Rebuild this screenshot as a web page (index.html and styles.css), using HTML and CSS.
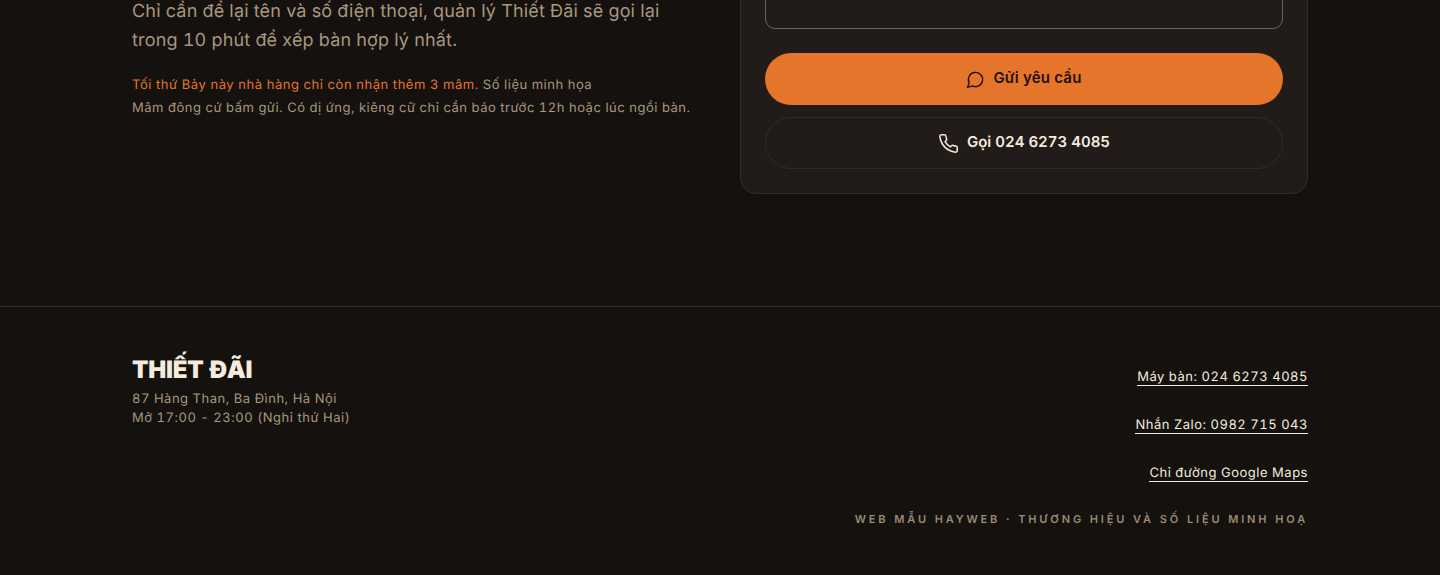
FILE: index.html
```html
<!DOCTYPE html>
<html lang="vi">
<head>
    <meta charset="UTF-8">
    <title>Thiết Đãi</title>
    <link rel="stylesheet" href="styles.css">
</head>
<body>
    <section class="booking">
        <div class="booking-copy">
            <p class="lead">Chỉ cần để lại tên và số điện thoại, quản lý Thiết Đãi sẽ gọi lại trong 10 phút để xếp bàn hợp lý nhất.</p>
            <p class="note"><span class="note-hot">Tối thứ Bảy này nhà hàng chỉ còn nhận thêm 3 mâm.</span> Số liệu minh họa<br>Mâm đông cứ bấm gửi. Có dị ứng, kiêng cữ chỉ cần báo trước 12h hoặc lúc ngồi bàn.</p>
        </div>
        <form class="card">
            <textarea class="field" aria-label="Ghi chú"></textarea>
            <button type="button" class="btn btn-primary">
                <svg class="icon icon-chat" viewBox="0 0 24 24"><path d="M7.9 20A9 9 0 1 0 4 16.1L2 22Z"/></svg>
                <span class="btn-label">Gửi yêu cầu</span>
            </button>
            <a class="btn btn-ghost" href="#">
                <svg class="icon icon-phone" viewBox="0 0 24 24"><path d="M22 16.92v3a2 2 0 0 1-2.18 2 19.79 19.79 0 0 1-8.63-3.07 19.5 19.5 0 0 1-6-6 19.79 19.79 0 0 1-3.07-8.67A2 2 0 0 1 4.11 2h3a2 2 0 0 1 2 1.72 12.84 12.84 0 0 0 .7 2.81 2 2 0 0 1-.45 2.11L8.09 9.91a16 16 0 0 0 6 6l1.27-1.27a2 2 0 0 1 2.11-.45 12.84 12.84 0 0 0 2.81.7A2 2 0 0 1 22 16.92z"/></svg>
                <span class="btn-label">Gọi 024 6273 4085</span>
            </a>
        </form>
    </section>

    <footer class="footer">
        <div class="footer-inner">
            <div class="brand">
                <div class="brand-name">THIẾT ĐÃI</div>
                <p class="brand-info">87 Hàng Than, Ba Đình, Hà Nội<br>Mở 17:00 - 23:00 (Nghỉ thứ Hai)</p>
            </div>
            <div class="footer-links">
                <a href="#">Máy bàn: 024 6273 4085</a>
                <a href="#">Nhắn Zalo: 0982 715 043</a>
                <a href="#">Chỉ đường Google Maps</a>
                <p class="credit">Web mẫu HayWeb · Thương hiệu và số liệu minh hoạ</p>
            </div>
        </div>
    </footer>
</body>
</html>
```

FILE: styles.css
```css
* {
    box-sizing: border-box;
}
html, body {
    height: 575px;
    overflow: hidden;
}
body {
    margin: 0;
    background: #14110e;
    color: #f5ecdf;
    font-family: Inter, "Noto Sans", sans-serif;
    font-variant-numeric: tabular-nums;
    text-rendering: geometricPrecision;
}
.booking {
    display: grid;
    grid-template-columns: 1fr 1fr;
    gap: 40px;
    width: 1176px;
    margin: -100px auto 0;
    padding-bottom: 112px;
}
.booking-copy {
    padding-top: 98px;
}
.lead {
    margin: 0;
    font-size: 18px;
    line-height: 28.8px;
    letter-spacing: 0.01em;
    color: #a8977f;
}
.note {
    margin: 18px 0 0;
    font-size: 13px;
    line-height: 23px;
    letter-spacing: 0.04em;
    color: #a8977f;
}
.note-hot {
    letter-spacing: 0.043em;
    color: #e5752b;
}
.card {
    display: flex;
    flex-direction: column;
    height: 294px;
    padding: 0 24px 24px;
    background: #211b19;
    border: 1px solid #312c28;
    border-radius: 16px;
}
.field {
    display: block;
    flex: 1;
    background: #211b19;
    border: 1px solid #6b655e;
    border-radius: 10px;
    resize: none;
}
.btn {
    display: flex;
    align-items: center;
    justify-content: center;
    gap: 8px;
    height: 52px;
    border-radius: 26px;
    font-family: inherit;
    font-size: 15px;
    font-weight: 600;
    text-decoration: none;
}
.btn-label {
    margin-bottom: 3px;
}
.btn-primary {
    margin-top: 24px;
    border: 0;
    background: #e5752b;
    color: #1f1109;
    letter-spacing: 0.015em;
}
.btn-ghost {
    margin-top: 12px;
    border: 1px solid #312c28;
    color: #f5ecdf;
}
.icon {
    fill: none;
    stroke: currentColor;
    stroke-width: 1.75;
    stroke-linecap: round;
    stroke-linejoin: round;
}
.icon-chat {
    width: 19px;
    height: 19px;
}
.icon-phone {
    width: 21px;
    height: 21px;
}
.footer {
    border-top: 1px solid #312c28;
}
.footer-inner {
    display: flex;
    justify-content: space-between;
    width: 1176px;
    margin: 0 auto;
    padding-top: 47px;
}
.brand-name {
    font-size: 24px;
    font-weight: 900;
    line-height: 32px;
    letter-spacing: -0.01em;
}
.brand-info {
    margin: 4px 0 0;
    font-size: 13px;
    line-height: 19px;
    letter-spacing: 0.04em;
    color: #a8977f;
}
.footer-links {
    display: flex;
    flex-direction: column;
    align-items: flex-end;
    padding-top: 15px;
}
.footer-links a {
    margin-bottom: 31px;
    border-bottom: 1px solid #f5ecdf;
    font-size: 13px;
    line-height: 16px;
    letter-spacing: 0.04em;
    color: #f5ecdf;
    text-decoration: none;
}
.credit {
    margin: -2px 0 0;
    font-size: 11px;
    line-height: 16px;
    font-weight: 600;
    letter-spacing: 0.26em;
    text-transform: uppercase;
    color: #9a8a74;
}
```
